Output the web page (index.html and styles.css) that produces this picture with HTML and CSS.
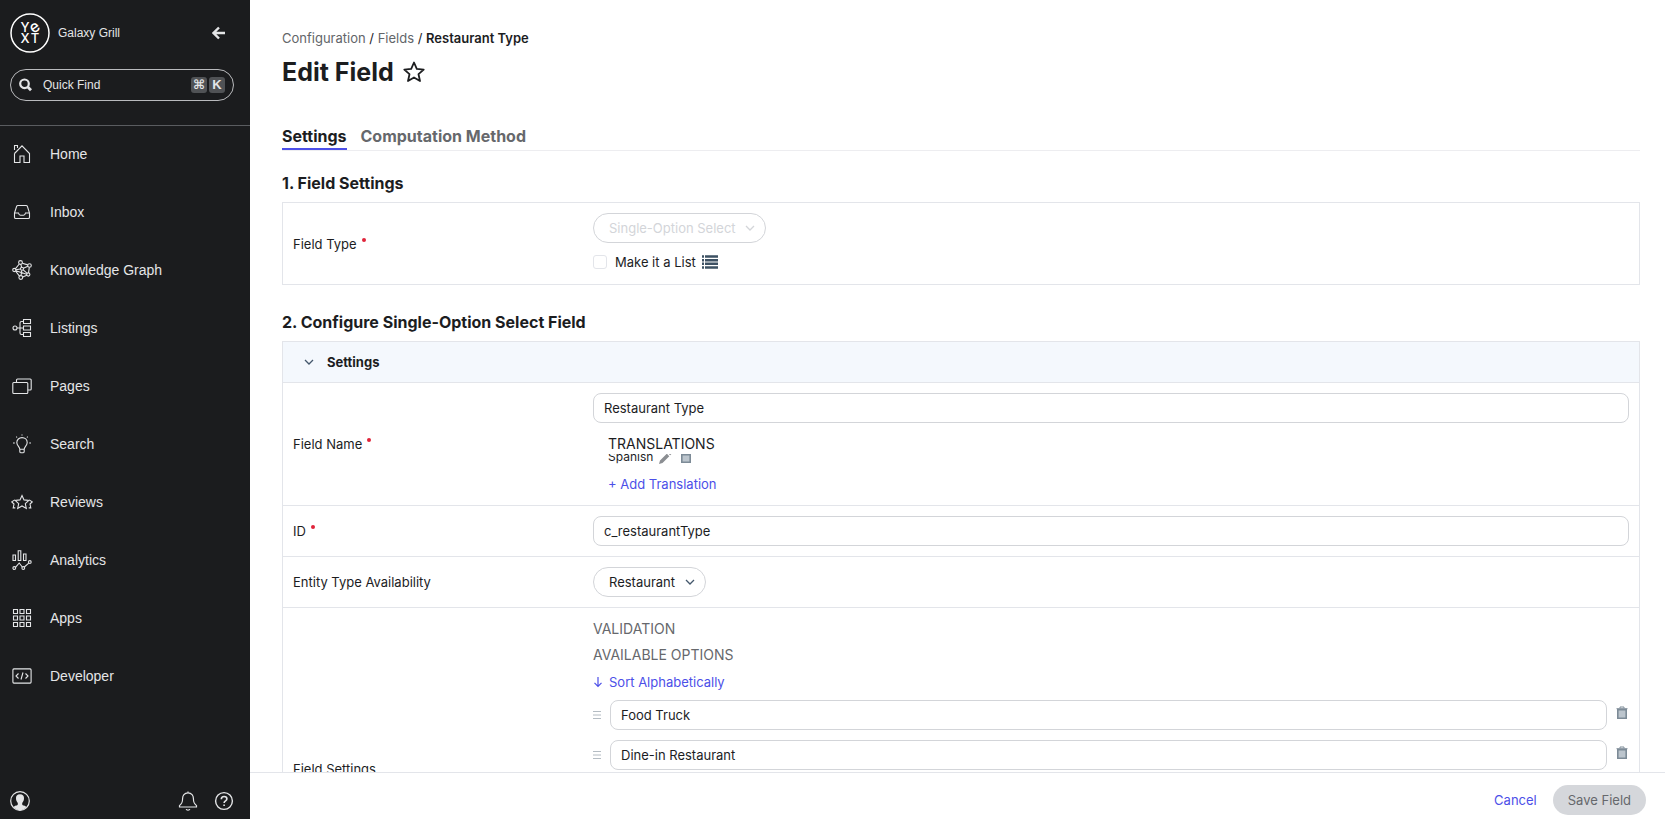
FILE: index.html
```html
<!DOCTYPE html>
<html lang="en">
<head>
    <meta charset="UTF-8">
    <meta name="viewport" content="width=device-width, initial-scale=1.0">
    <title>Edit Field</title>
    <link rel="stylesheet" href="styles.css">
</head>
<body>
    <aside class="sidebar">
        <div class="brand">
            <svg class="logo" viewBox="0 0 40 40" role="img" aria-label="Yext">
                <circle cx="20" cy="20" r="19"/>
                <text x="15" y="19">Y</text>
                <text class="logo-e" x="25" y="19" transform="rotate(-35 25 15)">e</text>
                <text x="15" y="30">X</text>
                <text x="25" y="30">T</text>
            </svg>
            <span class="brand-name">Galaxy Grill</span>
            <button class="icon-button" type="button" aria-label="Collapse">
                <svg width="14" height="14" viewBox="0 0 14 14" stroke-width="2.4"><path d="M13 7H2M7 1.5L1.5 7L7 12.5"/></svg>
            </button>
        </div>
        <button class="quick-find" type="button">
            <svg width="14" height="14" viewBox="0 0 14 14" stroke-width="2.2"><circle cx="5.5" cy="5.8" r="4.3"/><path d="M8.8 9.1L12 12.3" stroke-width="2.8"/></svg>
            <span class="quick-label">Quick Find</span>
            <kbd>⌘</kbd>
            <kbd>K</kbd>
        </button>
        <nav class="nav">
            <a href="#">
                <svg viewBox="0 0 20 20"><path d="M2.5 9.5V18.5H8V12H12V18.5H17.5V9.5L10 1.8L2.5 9.5M2.5 6V1.5H5.5V4"/></svg>
                Home
            </a>
            <a href="#">
                <svg viewBox="0 0 20 20"><path d="M2.5 11L4.7 4.2C4.9 3.7 5.3 3.5 5.8 3.5H14.2C14.7 3.5 15.1 3.7 15.3 4.2L17.5 11V15.2C17.5 16 17 16.5 16.2 16.5H3.8C3 16.5 2.5 16 2.5 15.2ZM2.5 11H6.5C6.8 12.5 7.5 13.2 8.5 13.2H11.5C12.5 13.2 13.2 12.5 13.5 11H17.5"/></svg>
                Inbox
            </a>
            <a href="#">
                <svg viewBox="0 0 20 20"><circle cx="8.5" cy="2.5" r="1.9"/><circle cx="17.5" cy="5.5" r="1.8"/><circle cx="2.3" cy="10" r="1.6"/><circle cx="10" cy="8.8" r="1.5"/><circle cx="16.3" cy="14.5" r="1.6"/><circle cx="8.8" cy="17.5" r="1.9"/><path d="M7.3 4L3.3 8.8M10.3 3.2L15.8 4.9M8.9 4.4L9.6 7.3M11.4 8.2L15.9 6.2M3.9 9.8L8.5 9M3.5 11L7.5 16.2M9.8 10.3L9 15.6M11.2 9.8L15.2 13.4M17.3 7.3L16.5 12.9M10.6 17L14.9 15.2M3.8 10.7L14.7 14.2"/></svg>
                Knowledge Graph
            </a>
            <a href="#">
                <svg viewBox="0 0 20 20"><circle cx="3" cy="10" r="2"/><path d="M5 10H11.5M11.5 3.5H9.5C8.5 3.5 8 4 8 5V15C8 16 8.5 16.5 9.5 16.5H11.5M11.5 1.5H18.5V5.5H11.5ZM11.5 8H18.5V12H11.5ZM11.5 14.5H18.5V18.5H11.5Z"/></svg>
                Listings
            </a>
            <a href="#">
                <svg viewBox="0 0 20 20"><rect x=".8" y="6.5" width="15" height="11" rx="1"/><path d="M4.5 6.5V4C4.5 3.4 4.9 3 5.5 3H18.2C18.8 3 19.2 3.4 19.2 4V13C19.2 13.6 18.8 14 18.2 14H15.8"/></svg>
                Pages
            </a>
            <a href="#">
                <svg viewBox="0 0 20 20"><path d="M7.8 15.2C7.8 12.8 4.8 11.8 4.8 8.6C4.8 5.6 7.1 3.6 10 3.6S15.2 5.6 15.2 8.6C15.2 11.8 12.2 12.8 12.2 15.2ZM7.8 15.2V17.4C7.8 18.3 8.4 18.8 9.2 18.8H10.8C11.6 18.8 12.2 18.3 12.2 17.4V15.2M10 .6V1.6M4.3 2.7L5 3.5M15.7 2.7L15 3.5M1 9H2.8M17.2 9H19"/></svg>
                Search
            </a>
            <a href="#">
                <svg class="wide" viewBox="0 0 22 20"><path d="M11 3.5L13 7.9L17.8 8.4L14.3 11.6L15.3 16.4L11 14L6.7 16.4L7.7 11.6L4.2 8.4L9 7.9ZM3.8 7.9L.8 9.9L3 12L2.2 15.9H4.3M18.2 7.9L21.2 9.9L19 12L19.8 15.9H17.7"/></svg>
                Reviews
            </a>
            <a href="#">
                <svg viewBox="0 0 20 20"><path d="M1 5H3.5V10.5H1ZM6.2 .8H8.8V10.5H6.2ZM11.5 4H14V10.5H11.5ZM3.5 17.3L7.2 13L10.3 17M12.3 17L16.8 13.2"/><circle cx="2.3" cy="18" r="1.4"/><circle cx="11.3" cy="18" r="1.4"/><circle cx="17.8" cy="12" r="1.4"/></svg>
                Analytics
            </a>
            <a href="#">
                <svg viewBox="0 0 20 20"><path d="M1.5 1.5H5.5V5.5H1.5ZM8 1.5H12V5.5H8ZM14.5 1.5H18.5V5.5H14.5ZM1.5 8H5.5V12H1.5ZM8 8H12V12H8ZM14.5 8H18.5V12H14.5ZM1.5 14.5H5.5V18.5H1.5ZM8 14.5H12V18.5H8ZM14.5 14.5H18.5V18.5H14.5Z"/></svg>
                Apps
            </a>
            <a href="#">
                <svg viewBox="0 0 20 20"><rect x=".9" y="2.9" width="18.2" height="14.2" rx="1"/><path d="M6.5 7.5L4 10L6.5 12.5M13.5 7.5L16 10L13.5 12.5M11 6.5L9 13.5"/></svg>
                Developer
            </a>
        </nav>
        <div class="sidebar-foot">
            <button class="icon-button" type="button" aria-label="Account">
                <svg width="20" height="20" viewBox="0 0 20 20" stroke-width="1.2"><circle cx="10" cy="10" r="9.3"/><path class="solid" d="M10 3.2C12.9 3.2 14.2 5 14 7.6C13.9 9.6 13.2 11 12.2 11.9V13.4C12.4 14.5 15.3 14.4 16.6 16C14.9 18 12.6 19.2 10 19.2S5.1 18 3.4 16C4.7 14.4 7.6 14.5 7.8 13.4V11.9C6.8 11 6.1 9.6 6 7.6C5.8 5 7.1 3.2 10 3.2Z"/></svg>
            </button>
            <button class="icon-button push" type="button" aria-label="Notifications">
                <svg width="20" height="20" viewBox="0 0 20 20" stroke-width="1.2"><path d="M10 1.8C6.3 1.8 4.6 4.5 4.6 7.5C4.6 12 3.5 13 1.5 14.6V16H18.5V14.6C16.5 13 15.4 12 15.4 7.5C15.4 4.5 13.7 1.8 10 1.8ZM10 .5V1.8M8.2 18C8.5 19.6 11.5 19.6 11.8 18"/></svg>
            </button>
            <button class="icon-button" type="button" aria-label="Help">
                <svg width="20" height="20" viewBox="0 0 20 20" stroke-width="1.4"><circle cx="10" cy="10" r="8.4"/><path d="M7.3 8.2C7.3 6.5 8.5 5.5 10.1 5.5C11.7 5.5 12.9 6.4 12.9 7.9C12.9 9.9 10.1 9.7 10.1 11.9M10.1 13.4V14.9" stroke-width="1.6"/></svg>
            </button>
        </div>
    </aside>

    <div class="page">
        <main class="content">
            <nav class="breadcrumb" aria-label="Breadcrumb">
                <a href="#">Configuration</a> / <a href="#">Fields</a> / <b>Restaurant Type</b>
            </nav>
            <div class="title-row">
                <h1>Edit Field</h1>
                <button class="star" type="button" aria-label="Add to favorites">
                    <svg width="22" height="22" viewBox="0 0 22 22"><path d="M11 1.5L13.8 7.9L20.7 8.6L15.5 13.2L17 20L11 16.5L5 20L6.5 13.2L1.3 8.6L8.2 7.9Z"/></svg>
                </button>
            </div>
            <div class="tabs">
                <a class="active" href="#">Settings</a>
                <a href="#">Computation Method</a>
            </div>

            <h2>1. Field Settings</h2>
            <section class="panel">
                <div class="row">
                    <label class="row-label required" for="fieldType">Field Type</label>
                    <div class="row-body">
                        <div class="select">
                            <select id="fieldType" disabled>
                                <option>Single-Option Select</option>
                            </select>
                            <svg width="10" height="6" viewBox="0 0 10 6"><path d="M1 1L5 5L9 1"/></svg>
                        </div>
                        <label class="check">
                            <input type="checkbox">
                            Make it a List
                            <svg width="16" height="14" viewBox="0 0 16 14"><path d="M0 1.5H2M3 1.5H16M0 5.2H2M3 5.2H16M0 8.8H2M3 8.8H16M0 12.5H2M3 12.5H16"/></svg>
                        </label>
                    </div>
                </div>
            </section>

            <h2>2. Configure Single-Option Select Field</h2>
            <section class="panel">
                <button class="panel-head" type="button">
                    <svg width="10" height="6" viewBox="0 0 10 6"><path d="M1 1L5 5L9 1"/></svg>
                    Settings
                </button>
                <div class="row">
                    <label class="row-label required" for="fieldName">Field Name</label>
                    <div class="row-body">
                        <input class="text" id="fieldName" type="text" value="Restaurant Type">
                        <div class="translations">
                            <div class="caption">TRANSLATIONS</div>
                            <div class="translation">
                                <span>Spanish</span>
                                <svg class="pencil" width="14" height="14" viewBox="0 0 14 14"><path d="M1 14L2 10.5L8.8 3.7L11.3 6.2L4.5 13ZM9.7 2.8L10.9 1.6L13.4 4.1L12.2 5.3Z"/></svg>
                                <svg class="trash" width="12" height="14" viewBox="0 0 12 14"><path class="lid" d="M4 2V1H8V2M.5 2.5H11.5"/><path class="can" d="M1.8 4.6H10.2V12.2H1.8Z"/></svg>
                            </div>
                            <button class="link" type="button">+ Add Translation</button>
                        </div>
                    </div>
                </div>
                <div class="row">
                    <label class="row-label required" for="fieldId">ID</label>
                    <div class="row-body">
                        <input class="text" id="fieldId" type="text" value="c_restaurantType">
                    </div>
                </div>
                <div class="row">
                    <label class="row-label" for="entityType">Entity Type Availability</label>
                    <div class="row-body">
                        <div class="select">
                            <select id="entityType">
                                <option>Restaurant</option>
                            </select>
                            <svg width="10" height="6" viewBox="0 0 10 6"><path d="M1 1L5 5L9 1"/></svg>
                        </div>
                    </div>
                </div>
                <div class="row tall">
                    <div class="row-label">Field Settings</div>
                    <div class="row-body options">
                        <div class="caption muted">VALIDATION</div>
                        <div class="caption muted">AVAILABLE OPTIONS</div>
                        <button class="link" type="button">
                            <svg width="10" height="12" viewBox="0 0 10 12"><path d="M5 1V10M1.5 6.8L5 10.3L8.5 6.8"/></svg>
                            Sort Alphabetically
                        </button>
                        <div class="option">
                            <svg class="handle" width="8" height="8" viewBox="0 0 8 8"><path d="M0 .5H8M0 4H8M0 7.5H8"/></svg>
                            <input class="text" type="text" value="Food Truck" aria-label="Option 1">
                            <button class="remove" type="button" aria-label="Delete option">
                                <svg class="trash" width="12" height="14" viewBox="0 0 12 14"><path class="lid" d="M4 2.2V1H8V2.2M.5 2.7H11.5"/><path class="can" d="M1.8 3.8H10.2V12.2H1.8Z"/></svg>
                            </button>
                        </div>
                        <div class="option">
                            <svg class="handle" width="8" height="8" viewBox="0 0 8 8"><path d="M0 .5H8M0 4H8M0 7.5H8"/></svg>
                            <input class="text" type="text" value="Dine-in Restaurant" aria-label="Option 2">
                            <button class="remove" type="button" aria-label="Delete option">
                                <svg class="trash" width="12" height="14" viewBox="0 0 12 14"><path class="lid" d="M4 2.2V1H8V2.2M.5 2.7H11.5"/><path class="can" d="M1.8 3.8H10.2V12.2H1.8Z"/></svg>
                            </button>
                        </div>
                    </div>
                </div>
            </section>
        </main>
        <footer class="actions">
            <button class="link" type="button">Cancel</button>
            <button class="save" type="submit" disabled>Save Field</button>
        </footer>
    </div>
</body>
</html>
```

FILE: styles.css
```css
* {
    box-sizing: border-box;
}
body {
    margin: 0;
    height: 100vh;
    display: flex;
    font-family: Inter, "Liberation Sans", sans-serif;
    font-size: 13px;
    line-height: 20px;
    color: #1c1d1f;
    background-color: #fff;
}
button, input, select {
    font: inherit;
    color: inherit;
    margin: 0;
}
button {
    padding: 0;
    border: none;
    background: none;
    cursor: pointer;
}
a {
    color: inherit;
    text-decoration: none;
}
svg {
    display: block;
    flex: none;
    fill: none;
    stroke: currentColor;
}

/* Sidebar */
.sidebar {
    width: 250px;
    flex: none;
    display: flex;
    flex-direction: column;
    background-color: #1b1c1e;
    color: #e4e5e7;
    font-family: "Liberation Sans", Arial, sans-serif;
}
.brand {
    display: flex;
    align-items: center;
    padding: 13px 24px 16px 10px;
    font-size: 12px;
}
.brand-name {
    flex: 1;
    margin-left: 8px;
}
.logo {
    width: 40px;
    height: 40px;
    color: #fff;
}
.logo circle {
    stroke-width: 1.5;
}
.logo text {
    fill: currentColor;
    stroke: none;
    font-family: Inter, sans-serif;
    font-size: 13px;
    font-weight: 500;
    text-anchor: middle;
}
.logo .logo-e {
    font-size: 16px;
}
.icon-button {
    display: flex;
}
.quick-find {
    display: flex;
    align-items: center;
    height: 32px;
    margin: 0 16px 24px 10px;
    padding: 0 8px;
    border: 1px solid #b9babd;
    border-radius: 16px;
    font-size: 12px;
}
.quick-label {
    flex: 1;
    margin-left: 10px;
    text-align: left;
}
kbd {
    width: 16px;
    height: 16px;
    margin-left: 2px;
    border-radius: 3px;
    background-color: #505255;
    font-family: "Liberation Sans", "DejaVu Sans", sans-serif;
    font-size: 13px;
    font-weight: bold;
    line-height: 16px;
    text-align: center;
}
.nav {
    flex: 1;
    border-top: 1px solid #5a5c60;
}
.nav a {
    display: flex;
    align-items: center;
    gap: 18px;
    height: 58px;
    padding: 0 0 2px 12px;
    font-size: 14px;
}
.nav svg {
    width: 20px;
    height: 20px;
    stroke-width: 1.1;
}
.nav .wide {
    width: 22px;
    margin: 0 -1px;
}
.sidebar-foot {
    display: flex;
    align-items: center;
    gap: 16px;
    padding: 0 16px 8px 10px;
}
.sidebar-foot .push {
    margin-left: auto;
}
.solid {
    fill: currentColor;
    stroke: none;
}

/* Page */
.page {
    flex: 1;
    min-width: 0;
    display: flex;
    flex-direction: column;
}
.content {
    flex: 1;
    min-height: 0;
    overflow-y: auto;
    scrollbar-width: none;
    padding: 28px 25px 0 32px;
}
.breadcrumb a {
    color: #626569;
}
.breadcrumb b {
    font-weight: 600;
}
.title-row {
    display: flex;
    align-items: center;
    gap: 9px;
    margin-top: 8px;
}
h1 {
    margin: 0;
    font-size: 25px;
    font-weight: 700;
    line-height: 32px;
}
.star {
    stroke-width: 1.8;
    stroke-linejoin: round;
}
.tabs {
    display: flex;
    gap: 14px;
    margin-top: 37px;
    border-bottom: 1px solid #ededf0;
    font-size: 16px;
    font-weight: 700;
    color: #66686c;
}
.tabs a {
    padding-bottom: 1px;
    line-height: 22px;
    border-bottom: 2px solid transparent;
}
.tabs .active {
    color: #1c1d1f;
    border-color: #4c4fe8;
}
h2 {
    margin: 21px 0 8px;
    font-size: 16px;
    font-weight: 700;
    line-height: 22px;
}
.panel {
    border: 1px solid #e3e5ea;
}
.panel + h2 {
    margin-top: 26px;
}
.panel-head {
    display: flex;
    align-items: center;
    gap: 13px;
    width: 100%;
    height: 40px;
    padding-left: 21px;
    background-color: #f4f8fd;
    font-weight: 700;
}
.panel-head svg {
    color: #44586c;
    stroke-width: 1.3;
}
.row {
    display: grid;
    grid-template-columns: 300px 1fr;
    align-items: center;
    padding: 10px;
}
.panel-head + .row, .row + .row {
    border-top: 1px solid #e3e5ea;
}
.required::after {
    content: "";
    display: inline-block;
    width: 4px;
    height: 4px;
    margin-left: 5px;
    border-radius: 50%;
    background-color: #e0243a;
    vertical-align: 7px;
}
.tall {
    min-height: 322px;
}

/* Controls */
.text {
    display: block;
    width: 100%;
    height: 30px;
    padding: 0 10px;
    border: 1px solid #d3d5d9;
    border-radius: 8px;
    background-color: #fff;
}
.select {
    display: grid;
    justify-content: start;
    align-items: center;
}
.select select, .select svg {
    grid-area: 1 / 1;
}
.select svg {
    justify-self: end;
    margin-right: 11px;
    color: #44586c;
    stroke-width: 1.3;
    pointer-events: none;
}
select {
    appearance: none;
    height: 30px;
    padding: 0 29px 0 15px;
    border: 1px solid #d3d5d9;
    border-radius: 15px;
    background-color: #fff;
}
select:disabled, .select select:disabled + svg {
    color: #d3d5d9;
    opacity: 1;
}
.check {
    display: flex;
    align-items: center;
    gap: 8px;
    margin: 9px 0 2px;
}
.check input {
    appearance: none;
    width: 14px;
    height: 14px;
    border: 1px solid #e3e5ea;
    border-radius: 3px;
}
.check svg {
    margin-left: -2px;
    color: #3d5163;
    stroke-width: 2.5;
}
.translations {
    padding: 11px 0 1px 15px;
}
.caption {
    font-size: 14px;
}
.muted {
    color: #66686c;
}
.translation {
    display: flex;
    align-items: flex-end;
    height: 10px;
    margin-bottom: 10px;
    overflow: hidden;
    font-size: 12px;
    line-height: 14px;
}
.pencil {
    margin: 0 8px 0 5px;
    fill: #8b8e92;
    stroke: none;
}
.link {
    display: flex;
    align-items: center;
    gap: 6px;
    color: #4c4fe8;
}
.trash {
    color: #7d8b97;
}
.can {
    fill: #bcc5cd;
    stroke-width: 1.6;
}
.options {
    align-self: start;
    display: flex;
    flex-direction: column;
    gap: 6px;
    padding-top: 1px;
}
.option {
    display: flex;
    align-items: center;
    gap: 9px;
    margin-bottom: 4px;
}
.options .link {
    margin: 1px 0 2px;
}
.options .link svg {
    stroke-width: 1.2;
}
.handle {
    color: #b4bcc3;
}
.remove {
    padding: 0 1px 4px 0;
}

/* Footer */
.actions {
    display: flex;
    justify-content: flex-end;
    align-items: center;
    gap: 16px;
    padding: 12px 19px 4px;
    border-top: 1px solid #e3e5ea;
}
.save {
    height: 30px;
    padding: 0 15px;
    border-radius: 15px;
    background-color: #d5d7db;
    color: #66686c;
}
```
